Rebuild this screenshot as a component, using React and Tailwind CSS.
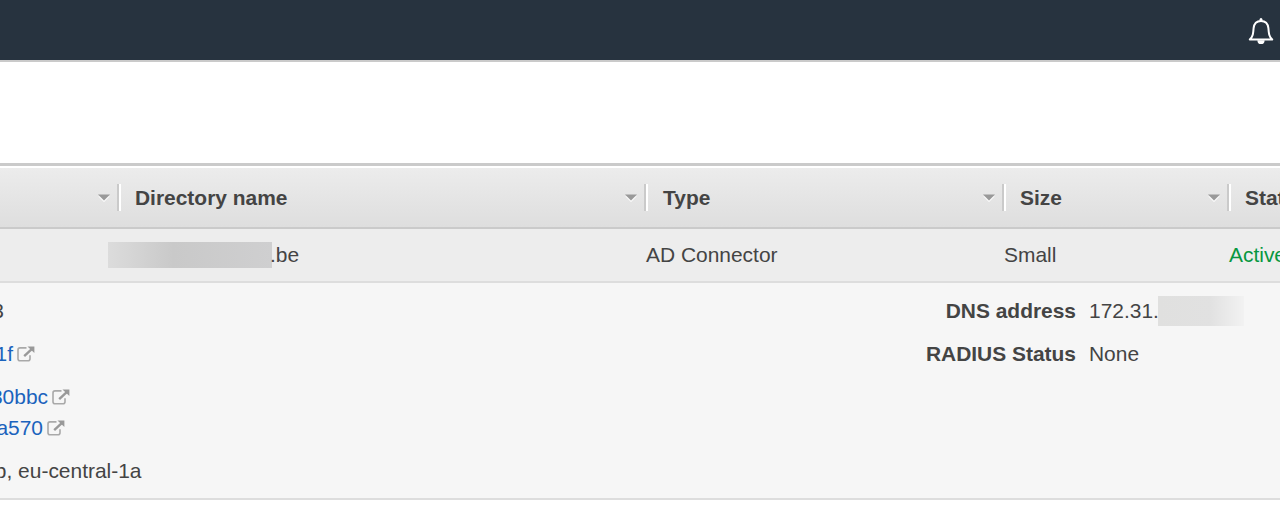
import React from 'react';

function BellIcon() {
  return (
    <svg width="26" height="28" viewBox="0 0 26 28" fill="none" className="block shrink-0">
      <path
        d="M1.8 22.5C5 19.4 5.2 16.6 5.6 11.2C6.1 6.2 8.8 3.9 13 3.9C17.2 3.9 19.9 6.2 20.4 11.2C20.8 16.6 21 19.4 24.2 22.5Z"
        stroke="#fff"
        strokeWidth="2"
        strokeLinejoin="round"
      />
      <path d="M11.8 3.6V2.5a1.2 1.2 0 0 1 2.4 0v1.1z" fill="#fff" stroke="#fff" strokeWidth=".5" />
      <path d="M9.4 23.2h7.2a3.6 3.9 0 0 1-7.2 0z" fill="#fff" />
    </svg>
  );
}

function ExternalIcon() {
  return (
    <svg width="18" height="16" viewBox="0 0 18 16" fill="none" className="block shrink-0">
      <path
        d="M9.5 1.9H3Q1 1.9 1 3.9V12.8Q1 14.8 3 14.8H11Q13 14.8 13 12.8V9.3"
        stroke="#a9a9a9"
        strokeWidth="1.6"
      />
      <path d="M7.2 10.2L15 2.9" stroke="#999" strokeWidth="2.4" />
      <path d="M10.5.5H17.4V7Z" fill="#999" />
    </svg>
  );
}

function SortArrow() {
  return (
    <svg width="14" height="10" viewBox="0 0 14 10" className="block shrink-0">
      <path d="M1.2 3.2H12.8L7 9.2Z" fill="#fafafa" />
      <path d="M1 1.5H13L7 7.6Z" fill="#999" />
    </svg>
  );
}

function HeaderCell({ width, label, pad = 'pl-[14px]' }) {
  return (
    <div className={`flex shrink-0 items-center justify-between ${width}`}>
      <span className={`font-bold ${pad}`}>{label}</span>
      <div className="flex items-center gap-[6px]">
        <SortArrow />
        <div className="h-[27px] w-1 border-l-2 border-[#cacaca] bg-white" />
      </div>
    </div>
  );
}

function LinkRow({ text, width }) {
  return (
    <div className="flex h-[31px] items-center">
      <div className={`flex shrink-0 justify-end whitespace-nowrap text-[#1b63bd] ${width}`}>{text}</div>
      <div className="ml-1 pt-px">
        <ExternalIcon />
      </div>
    </div>
  );
}

export default function App() {
  return (
    <div className="h-[516px] w-[1280px] overflow-hidden bg-white font-['Liberation_Sans',Arial,sans-serif] text-[20.95px] leading-[31px] text-[#444]">
      <header className="flex h-[62px] items-center justify-end border-b-2 border-[#cacaca] bg-[#27333f] pt-[2px] pr-[6px]">
        <BellIcon />
      </header>
      <main className="pt-[101px]">
        <div className="border-t-[3px] border-[#cacaca] pt-[2px]">
          <div className="flex h-[61px] overflow-hidden border-b-2 border-[#cacaca] bg-linear-to-b from-[#ececec] to-[#dedede]">
            <HeaderCell width="w-[121px]" label="" />
            <HeaderCell width="w-[527px]" label="Directory name" />
            <HeaderCell width="w-[358px]" label="Type" pad="pl-[15px]" />
            <HeaderCell width="w-[225px]" label="Size" />
            <HeaderCell width="w-[225px]" label="Status" />
          </div>
          <div className="flex h-[54px] items-center overflow-hidden border-b-2 border-[#dddddd] bg-[#ededed]">
            <div className="flex w-[646px] shrink-0 items-center pl-[108px]">
              <div className="h-[26px] w-[164px] bg-linear-to-r from-[#dcdcdc] via-[#c9c9c9] via-40% to-[#cfcfd0]" />
              <span className="-ml-[2px] pb-[2px]">.be</span>
            </div>
            <div className="w-[358px] shrink-0 pb-[2px]">AD Connector</div>
            <div className="w-[225px] shrink-0 pb-[2px]">Small</div>
            <div className="shrink-0 pb-[2px] text-[#079740]">Active</div>
          </div>
          <div className="flex h-[217px] justify-between overflow-hidden border-b-2 border-[#dddddd] bg-[#f6f6f6] pt-3">
            <div className="flex w-[400px] flex-col gap-3">
              <div className="flex w-[4px] justify-end">3</div>
              <LinkRow text="1f" width="w-[13px]" />
              <div>
                <LinkRow text="30bbc" width="w-[48px]" />
                <LinkRow text="a570" width="w-[43px]" />
              </div>
              <div className="flex w-[141.5px] justify-end whitespace-nowrap">b, eu-central-1a</div>
            </div>
            <div className="flex w-[380px] flex-col gap-3">
              <div className="flex h-[31px] items-center">
                <div className="w-[176px] text-right font-bold">DNS address</div>
                <div className="ml-[13px] w-[69px]">172.31.</div>
                <div className="h-[30px] w-[86px] bg-linear-to-r from-[#e0e0df] via-[#e1e1e1] via-60% to-[#f2f2f2]" />
              </div>
              <div className="flex h-[31px] items-center">
                <div className="w-[176px] text-right font-bold">RADIUS Status</div>
                <div className="ml-[13px]">None</div>
              </div>
            </div>
          </div>
        </div>
      </main>
    </div>
  );
}
